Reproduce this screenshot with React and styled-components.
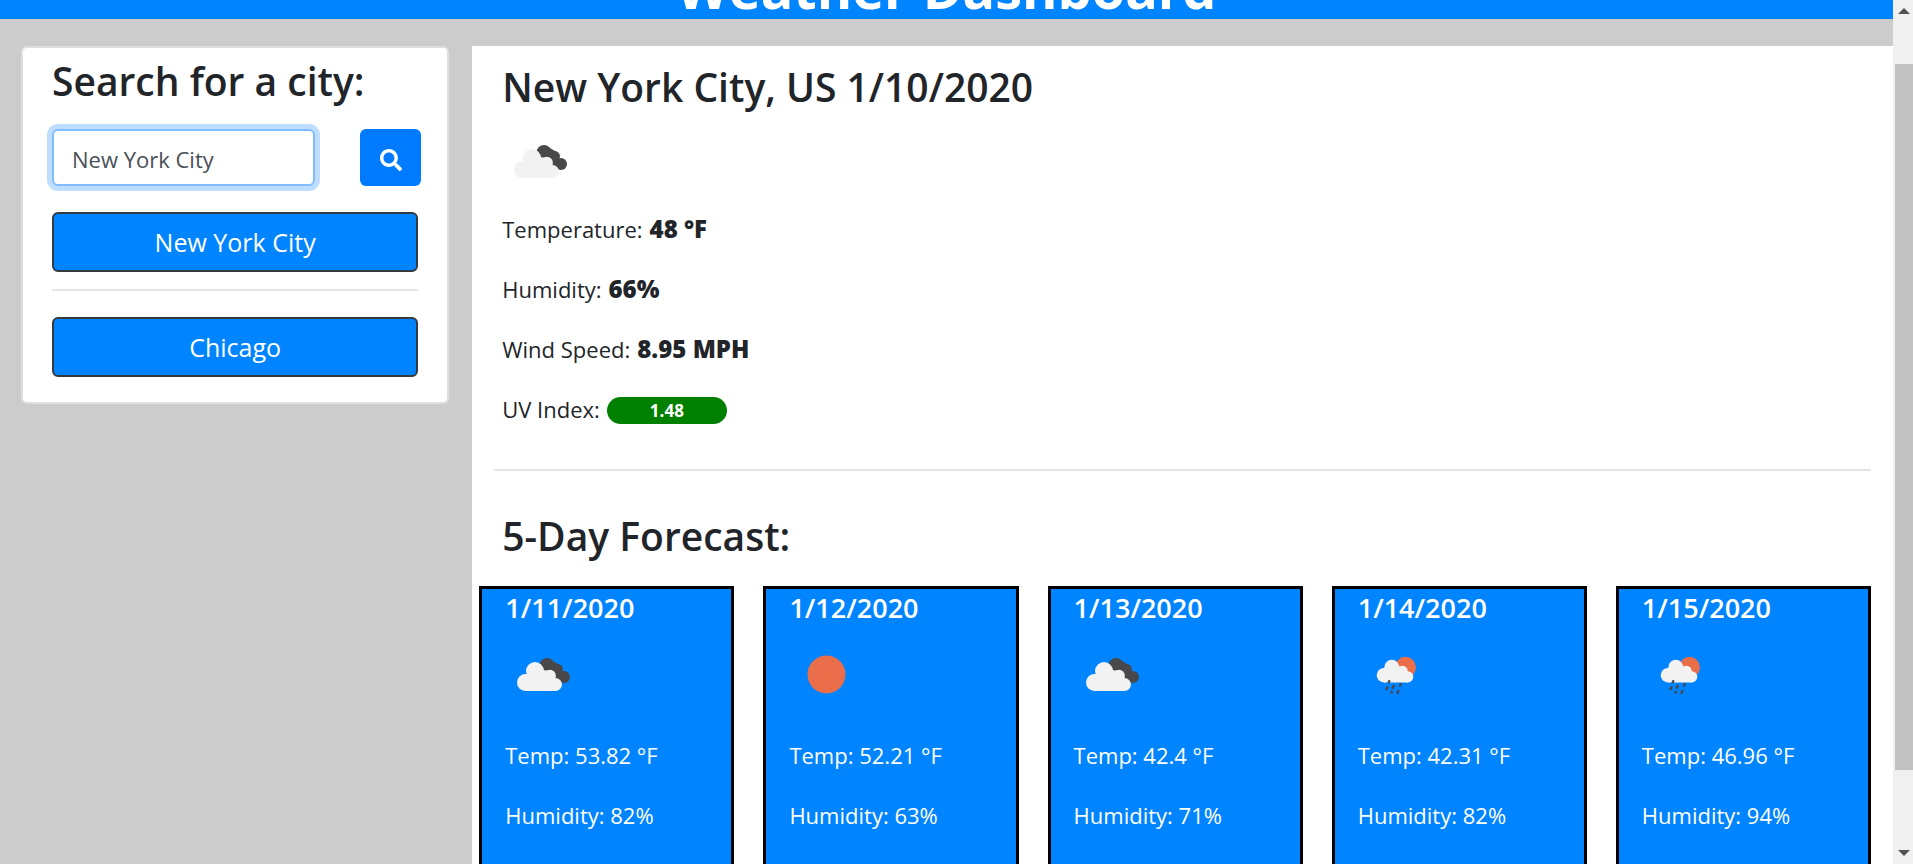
import React from "react";
import styled, { createGlobalStyle } from "styled-components";
import { FaSearch } from "react-icons/fa";

const GlobalStyle = createGlobalStyle`
  *, *::before, *::after { box-sizing: border-box; }
  body {
    margin: 0;
    background: #cccccc;
    color: #212529;
    font-family: "Open Sans", "Noto Sans", sans-serif;
    font-size: 22px;
    line-height: 36px;
  }
  h1, h2, h3, p { margin: 0; }
`;

const Shell = styled.div`
  display: grid;
  grid-template-columns: minmax(0, 1fr) 20px;
  height: 100vh;
  overflow: hidden;
`;

const Page = styled.div`
  display: flex;
  flex-direction: column;
  overflow: hidden;
`;

const Header = styled.header`
  display: flex;
  flex: none;
  justify-content: center;
  align-items: flex-end;
  height: 19px;
  overflow: hidden;
  background: #0084ff;
  color: #ffffff;
`;

const SiteTitle = styled.h1`
  font-size: 54px;
  font-weight: 700;
  line-height: 62px;
`;

const Columns = styled.div`
  display: grid;
  grid-template-columns: calc(25% - 1px) minmax(0, 1fr);
  flex: 1;
  min-height: 0;
  padding-top: 27px;
`;

const Sidebar = styled.aside`
  padding: 0 23px 0 21px;
`;

const SearchCard = styled.section`
  padding: 8px 29px 25px;
  border: 2px solid #dfdfdf;
  border-radius: 6px;
  background: #ffffff;
`;

const Heading = styled.h2`
  font-size: 39px;
  font-weight: 600;
  line-height: 50px;
`;

const SearchForm = styled.form`
  display: flex;
  justify-content: space-between;
  margin: 23px -3px 26px 0;
`;

const SearchInput = styled.input`
  width: 263px;
  min-width: 0;
  height: 57px;
  padding: 2px 18px 0;
  border: 2px solid #80bdff;
  border-radius: 6px;
  outline: none;
  box-shadow: 0 0 0 5px rgba(0, 123, 255, 0.25);
  color: #495057;
  font: inherit;
`;

const SearchButton = styled.button`
  display: flex;
  align-items: center;
  justify-content: center;
  width: 61px;
  height: 57px;
  padding: 5px 0 0;
  border: 0;
  border-radius: 6px;
  background: #007bff;
  color: #ffffff;
  font-size: 22px;
`;

const CityButton = styled.button`
  display: block;
  width: 100%;
  height: 60px;
  padding: 0;
  border: 2px solid #343a40;
  border-radius: 6px;
  background: #0084ff;
  color: #ffffff;
  font: inherit;
  font-size: 25px;
`;

const Rule = styled.hr`
  height: 2px;
  margin: ${(p) => p.$margin};
  border: 0;
  background: #e5e5e5;
`;

const Main = styled.main`
  padding: 16px 22px 0 7px;
  background: #ffffff;
`;

const Block = styled.section`
  padding-left: 23px;
`;

const Current = styled(Block)`
  display: flex;
  flex-direction: column;
`;

const WeatherSvg = styled.svg`
  display: block;
  width: 75px;
  height: 75px;
  margin: 12px 0 ${(p) => p.$below}px;
`;

const Metric = styled.p`
  display: flex;
  gap: 7px;
  & + & { margin-top: 24px; }
`;

const Value = styled.strong`
  font-size: 24px;
  font-weight: 800;
`;

const UvBadge = styled.span`
  align-self: center;
  width: 120px;
  height: 27px;
  margin-top: 3px;
  border-radius: 14px;
  background: #008000;
  color: #ffffff;
  font-size: 17px;
  font-weight: 700;
  line-height: 27px;
  text-align: center;
`;

const Forecast = styled.div`
  display: grid;
  grid-template-columns: repeat(5, minmax(0, 1fr));
  gap: 29px;
  margin-top: 25px;
`;

const DayCard = styled.article`
  height: 320px;
  padding: 2px 23px;
  border: 3px solid #000000;
  background: #0084ff;
  color: #ffffff;
`;

const DayDate = styled.h3`
  font-size: 27px;
  font-weight: 600;
  line-height: 34px;
`;

const DayMetric = styled.p`
  & + & { margin-top: 24px; }
`;

const Scrollbar = styled.div`
  display: flex;
  flex-direction: column;
  padding-left: 2px;
  background: #f0f0f0;
`;

const ScrollArrow = styled.button`
  display: flex;
  justify-content: center;
  align-items: center;
  flex: none;
  height: 22px;
  padding: 0;
  border: 0;
  background: transparent;
`;

const ScrollTrack = styled.div`
  display: grid;
  grid-template-rows: 42fr 706fr 72fr;
  flex: 1;
`;

const ScrollThumb = styled.div`
  grid-row: 2;
  background: #c1c1c1;
`;

function Clouds() {
  return (
    <>
      <g fill="#48484a">
        <circle cx="42" cy="28.5" r="7.5" />
        <circle cx="52.5" cy="32.5" r="5.5" />
        <circle cx="59" cy="40" r="6" />
        <path d="M36 30l8-8 11 6 4 14-3 4-10-3z" />
      </g>
      <g fill="#f2f2f2">
        <circle cx="20.5" cy="45.5" r="8.5" />
        <circle cx="30" cy="34" r="9" />
        <circle cx="45" cy="38.5" r="5.8" />
        <circle cx="50.5" cy="47.5" r="6.5" />
        <path d="M20.5 38l10-5h8l2.5.6h4l5.5 5.5v14.9h-30z" />
      </g>
    </>
  );
}

function Sun() {
  return <circle cx="37.5" cy="37.5" r="19" fill="#eb6e4b" />;
}

function SunShower() {
  return (
    <>
      <circle cx="47.5" cy="30.3" r="10.5" fill="#eb6e4b" />
      <g fill="#f2f2f2">
        <circle cx="26" cy="38.2" r="7.3" />
        <circle cx="33.8" cy="30.2" r="7.5" />
        <circle cx="44.5" cy="34" r="5.2" />
        <circle cx="49.7" cy="39.8" r="5.6" />
        <path d="M26 32l8-3h7l4 1.5 5 4.5v10.4H26z" />
      </g>
      <g stroke="#48484a" strokeWidth="2.4" strokeLinecap="round">
        <path d="M31.2 44.2l-.4 1M29.4 50.3l-1 1.8M35.8 48.8l-1 2M42.6 47.2l-.6 1.4M33.8 54.8l-.2.6M40.4 54l-1 1.8" />
      </g>
    </>
  );
}

const DRAWINGS = {
  clouds: { label: "Broken clouds", Drawing: Clouds },
  sun: { label: "Clear sky", Drawing: Sun },
  shower: { label: "Rain", Drawing: SunShower },
};

function WeatherIcon({ kind, below }) {
  const { label, Drawing } = DRAWINGS[kind];
  return (
    <WeatherSvg viewBox="0 0 75 75" role="img" aria-label={label} $below={below}>
      <Drawing />
    </WeatherSvg>
  );
}

const DAYS = [
  { date: "1/11/2020", kind: "clouds", temp: "53.82", humidity: 82 },
  { date: "1/12/2020", kind: "sun", temp: "52.21", humidity: 63 },
  { date: "1/13/2020", kind: "clouds", temp: "42.4", humidity: 71 },
  { date: "1/14/2020", kind: "shower", temp: "42.31", humidity: 82 },
  { date: "1/15/2020", kind: "shower", temp: "46.96", humidity: 94 },
];

export default function App() {
  return (
    <Shell>
      <GlobalStyle />
      <Page>
        <Header>
          <SiteTitle>Weather Dashboard</SiteTitle>
        </Header>
        <Columns>
          <Sidebar>
            <SearchCard>
              <Heading>
                <label htmlFor="city">Search for a city:</label>
              </Heading>
              <SearchForm onSubmit={(e) => e.preventDefault()}>
                <SearchInput id="city" type="text" defaultValue="New York City" />
                <SearchButton type="submit" aria-label="Search">
                  <FaSearch />
                </SearchButton>
              </SearchForm>
              <CityButton type="button">New York City</CityButton>
              <Rule $margin="17px 0 26px" />
              <CityButton type="button">Chicago</CityButton>
            </SearchCard>
          </Sidebar>
          <Main>
            <Current>
              <Heading>New York City, US 1/10/2020</Heading>
              <WeatherIcon kind="clouds" below={12} />
              <Metric>Temperature: <Value>48 °F</Value></Metric>
              <Metric>Humidity: <Value>66%</Value></Metric>
              <Metric>Wind Speed: <Value>8.95 MPH</Value></Metric>
              <Metric>UV Index: <UvBadge>1.48</UvBadge></Metric>
            </Current>
            <Rule $margin="42px 0 40px 15px" />
            <Block>
              <Heading>5-Day Forecast:</Heading>
            </Block>
            <Forecast>
              {DAYS.map((day) => (
                <DayCard key={day.date}>
                  <DayDate>{day.date}</DayDate>
                  <WeatherIcon kind={day.kind} below={25} />
                  <DayMetric>Temp: {day.temp} °F</DayMetric>
                  <DayMetric>Humidity: {day.humidity}%</DayMetric>
                </DayCard>
              ))}
            </Forecast>
          </Main>
        </Columns>
      </Page>
      <Scrollbar>
        <ScrollArrow type="button" aria-label="Scroll up">
          <svg width="12" height="6" viewBox="0 0 12 6"><path d="M6 0l6 6H0z" fill="#505050" /></svg>
        </ScrollArrow>
        <ScrollTrack>
          <ScrollThumb />
        </ScrollTrack>
        <ScrollArrow type="button" aria-label="Scroll down">
          <svg width="12" height="6" viewBox="0 0 12 6"><path d="M0 0h12L6 6z" fill="#505050" /></svg>
        </ScrollArrow>
      </Scrollbar>
    </Shell>
  );
}
